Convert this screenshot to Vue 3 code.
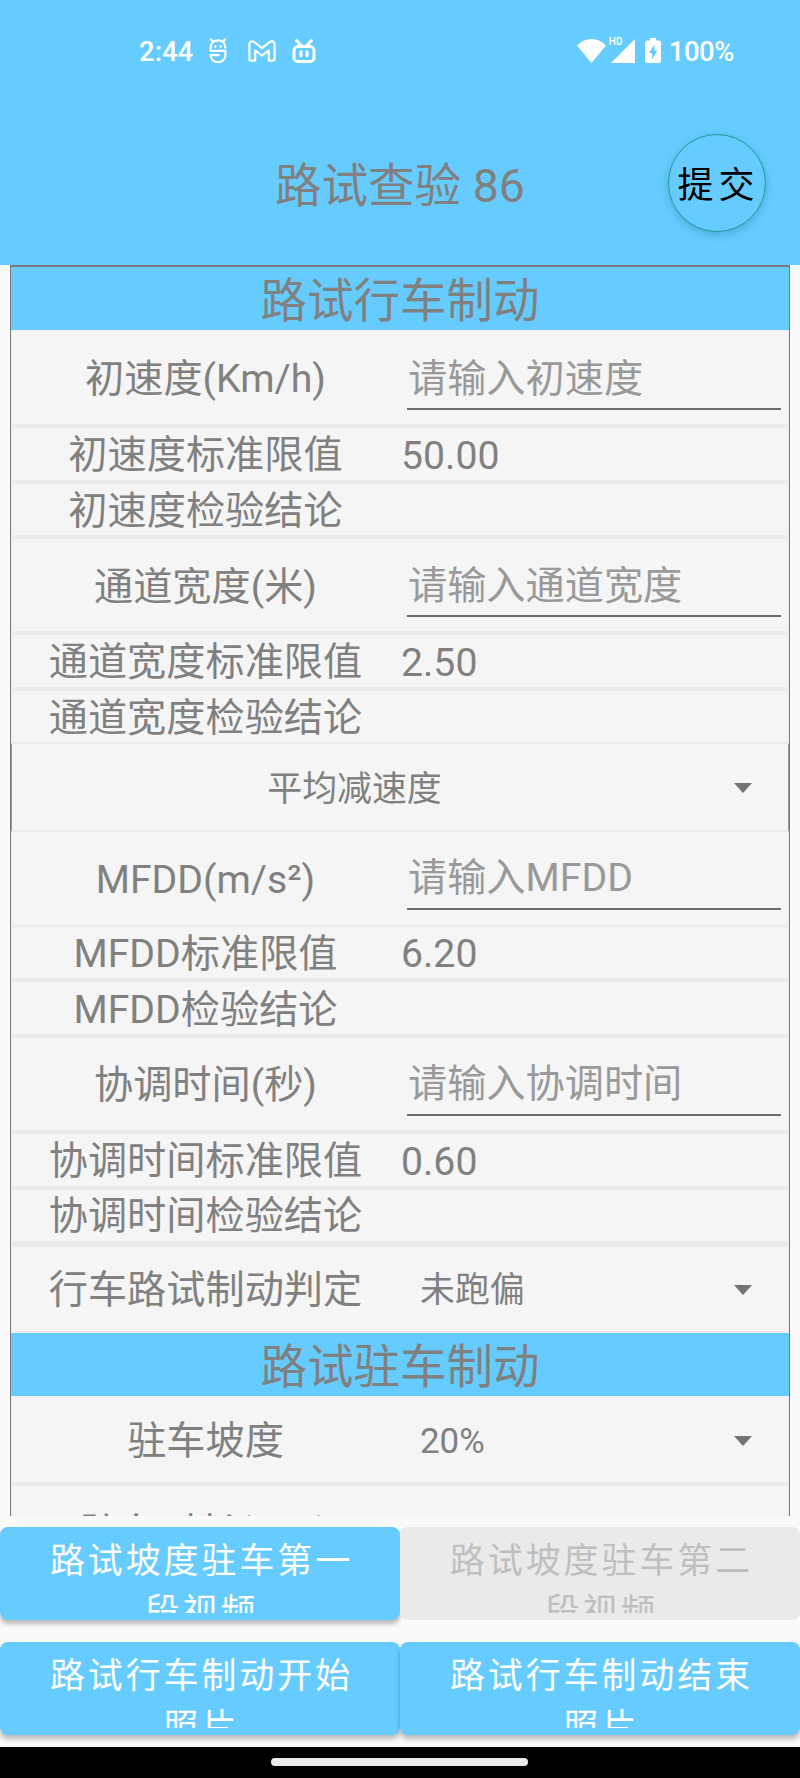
<template>
  <div class="screen">
    <header class="app-bar">
      <div class="status-bar">
        <div class="status-left">
          <span class="clock">2:44</span>
          <svg class="icon-s" viewBox="0 0 18 26">
            <path d="M16.4 9.6C16.2 5 13 2.4 9 2.4S1.6 5 1.6 9.6v3.2h14.8v4.4c0 4-3.2 7-7.4 7s-7.400-3-7.400-7h8.200" />
            <path d="M2 1.400 4 4M16 1.400 14 4M6.400 8v.8M11.600 8v.8" />
          </svg>
          <svg class="icon-m" viewBox="0 0 28 22">
            <path d="M1.400 4.200c0-2.600 2.800-3.600 4.800-2.200L14 8.200 21.800 2c2-1.400 4.800-.4 4.800 2.200V19q0 1.600-1.600 1.600h-4.200V10.400L14 15.600 7.200 10.400V20.600H3Q1.400 20.600 1.400 19Z" />
          </svg>
          <svg class="icon-tv" viewBox="0 0 24 24">
            <rect x="2" y="7.600" width="20" height="14.800" rx="4" />
            <path d="M4.600 1.600 9.600 7M19.400 1.600 14.400 7M9 12.800v4M15 12.800v4" />
          </svg>
        </div>
        <div class="status-right">
          <svg class="icon-wifi" viewBox="0 0 29 24">
            <path d="M0 6.400Q14.500-6.400 29 6.400L14.500 24Z" />
          </svg>
          <span class="hd">HD</span>
          <svg class="icon-signal" viewBox="0 0 24 24"><path d="M24 0V24H0Z" /></svg>
          <svg class="icon-battery" viewBox="0 0 16 25">
            <path fill-rule="evenodd" d="M5 0h6v2.500h3q2 0 2 2V23q0 2-2 2H2q-2 0-2-2V4.500q0-2 2-2h3ZM9.500 6.500 4 15h3v6l5.500-8.500h-3Z" />
          </svg>
          <span class="battery-text">100%</span>
        </div>
      </div>
      <div class="title-bar">
        <h1>路试查验 86</h1>
        <button class="submit" type="button">提交</button>
      </div>
    </header>

    <main class="sheet">
      <template v-for="(row, i) in rows" :key="i">
        <h2 v-if="row.type === 'section'" class="section">{{ row.label }}</h2>
        <div v-else-if="row.type === 'picker'" class="row picker" :class="row.gap">
          <span class="picker-text">{{ row.value }}</span>
          <i class="arrow"></i>
        </div>
        <div v-else class="row" :class="[row.type, row.gap]">
          <span class="label">{{ row.label }}</span>
          <div v-if="row.type === 'input'" class="field">
            <input v-if="row.hint" type="text" :placeholder="row.hint" />
          </div>
          <div v-else-if="row.type === 'select'" class="dropdown">
            <span>{{ row.value }}</span>
            <i class="arrow"></i>
          </div>
          <span v-else class="value">{{ row.value }}</span>
        </div>
      </template>
    </main>

    <footer class="actions">
      <button
        v-for="action in actions"
        :key="action.label"
        class="action"
        type="button"
        :disabled="action.disabled"
      >
        <span>{{ action.label }}</span>
      </button>
    </footer>
    <div class="nav-bar"><i></i></div>
  </div>
</template>

<script setup>
// gap 表示行下方分隔线的粗细：thin 为 2px，wide 为 6px，默认 4px
const rows = [
  { type: 'section', label: '路试行车制动' },
  { type: 'input', label: '初速度(Km/h)', hint: '请输入初速度' },
  { type: 'text', label: '初速度标准限值', value: '50.00' },
  { type: 'text', label: '初速度检验结论', value: '' },
  { type: 'input', label: '通道宽度(米)', hint: '请输入通道宽度' },
  { type: 'text', label: '通道宽度标准限值', value: '2.50' },
  { type: 'text', label: '通道宽度检验结论', value: '', gap: 'thin' },
  { type: 'picker', value: '平均减速度', gap: 'thin' },
  { type: 'input', label: 'MFDD(m/s²)', hint: '请输入MFDD', gap: 'thin' },
  { type: 'text', label: 'MFDD标准限值', value: '6.20' },
  { type: 'text', label: 'MFDD检验结论', value: '' },
  { type: 'input', label: '协调时间(秒)', hint: '请输入协调时间' },
  { type: 'text', label: '协调时间标准限值', value: '0.60' },
  { type: 'text', label: '协调时间检验结论', value: '', gap: 'wide' },
  { type: 'select', label: '行车路试制动判定', value: '未跑偏', gap: 'thin' },
  { type: 'section', label: '路试驻车制动' },
  { type: 'select', label: '驻车坡度', value: '20%' },
  { type: 'input', label: '驻车时长(min)' }
]

const actions = [
  { label: '路试坡度驻车第一段视频' },
  { label: '路试坡度驻车第二段视频', disabled: true },
  { label: '路试行车制动开始照片' },
  { label: '路试行车制动结束照片' }
]
</script>

<style>
body {
  margin: 0;
  background: #fafafa;
}
</style>

<style scoped>
.screen {
  display: flex;
  flex-direction: column;
  width: 800px;
  height: 1778px;
  overflow: hidden;
  color: #808080;
  background: #fafafa;
  font-family: Roboto, "Noto Sans CJK SC", sans-serif;
}

.screen * {
  box-sizing: border-box;
}

button,
input {
  font-family: inherit;
}

.app-bar {
  flex: none;
  height: 265px;
  background: #66ccff;
}

.status-bar {
  display: flex;
  justify-content: space-between;
  height: 100px;
  padding: 0 66px 0 139px;
  color: #fff;
}

.status-left,
.status-right {
  display: flex;
  align-items: center;
  height: 101px;
}

.status-bar svg {
  flex: none;
  fill: #fff;
}

.clock {
  width: 70px;
  padding-top: 1px;
  font-size: 27.5px;
  font-weight: 500;
}

.status-left svg {
  fill: none;
  stroke: #fff;
  stroke-width: 2.2;
  stroke-linecap: round;
  stroke-linejoin: round;
}

.icon-s {
  width: 18px;
  height: 26px;
}

.icon-m {
  width: 28px;
  height: 22px;
  margin-left: 21px;
}

.status-left .icon-tv {
  width: 24px;
  height: 24px;
  margin-left: 16px;
  stroke-width: 3;
}

.icon-wifi {
  width: 29px;
  height: 24px;
}

.hd {
  align-self: flex-start;
  width: 14px;
  margin: 36px -12px 0 3px;
  font-size: 10px;
  line-height: 12px;
  font-weight: 500;
}

.icon-signal {
  width: 24px;
  height: 24px;
  margin: 0 10px 0 0;
}

.icon-battery {
  width: 16px;
  height: 25px;
}

.battery-text {
  margin-left: 8px;
  padding-top: 2px;
  font-size: 27.5px;
  font-weight: 500;
  letter-spacing: -0.5px;
}

.title-bar {
  display: grid;
  grid-template-columns: 1fr auto 1fr;
  align-items: center;
  height: 166px;
}

.title-bar h1 {
  grid-column: 2;
  margin: 0;
  padding-top: 5px;
  font-size: 46.5px;
  line-height: 54px;
  font-weight: 400;
}

.submit {
  justify-self: end;
  width: 98px;
  height: 98px;
  margin-right: 34px;
  padding: 0 0 2px 3px;
  color: #000;
  background: #66ccff;
  border: 1px solid #1f9a96;
  border-radius: 50%;
  box-shadow: 0 3px 10px rgba(0, 50, 80, 0.22);
  font-family: KaiTi, STKaiti, "AR PL UKai CN", "Noto Sans CJK SC", sans-serif;
  font-size: 36px;
  letter-spacing: 5px;
  white-space: nowrap;
}

.sheet {
  flex: none;
  height: 1251px;
  margin: 0 10px;
  overflow: hidden;
  background: #f0f0f0;
  border: solid #777;
  border-width: 2px 1px 0;
}

.section {
  height: 63px;
  margin: 0 0 2px;
  padding-top: 6px;
  background: #66ccff;
  font-size: 46.5px;
  line-height: 56px;
  font-weight: 400;
  text-align: center;
}

.row {
  display: flex;
  align-items: stretch;
  height: 55.6px;
  margin: 0 2px;
  background: #f5f5f5;
  border-bottom: 4px solid #eaeaea;
  font-size: 39.2px;
}

.row.input {
  height: 96px;
}

.row.select {
  height: 88px;
}

.row.thin {
  border-bottom-width: 2px;
}

.row.text.thin {
  height: 53px;
}

.row.input.thin {
  height: 95px;
}

.row.select.thin {
  height: 86px;
}

.row.text.wide {
  height: 57px;
  border-bottom-width: 6px;
}

.label {
  display: flex;
  align-items: center;
  justify-content: center;
  width: 387px;
  padding: 4px 2px 0 0;
  line-height: 1;
  white-space: nowrap;
}

.value {
  display: flex;
  align-items: center;
  padding: 5px 0 0 1px;
  line-height: 1;
}

.field {
  flex: 1;
  padding: 12px 6px 0 7px;
}

.field input {
  display: block;
  width: 100%;
  height: 66px;
  padding: 5px 0 0 1px;
  color: #666;
  background: transparent;
  border: 0;
  border-bottom: 2px solid #6b6b6b;
  border-radius: 0;
  outline: none;
  font-size: 39.2px;
}

.field input::placeholder {
  color: #999;
  opacity: 1;
}

.dropdown {
  display: flex;
  flex: 1;
  align-items: center;
  justify-content: space-between;
  padding: 2px 35px 0 20px;
  font-size: 34.9px;
  line-height: 1;
}

.dropdown span {
  padding-top: 4px;
}

.arrow {
  width: 0;
  height: 0;
  border: solid transparent;
  border-width: 10px 9.5px 0;
  border-top-color: #737373;
}

.picker {
  height: 88px;
  align-items: center;
  margin: 0;
  padding: 3px 36px 0 0;
  border-right: 1px solid #999;
  border-left: 1px solid #999;
  font-size: 34.9px;
  line-height: 1;
}

.picker-text {
  flex: 1;
  padding: 4px 37px 0 0;
  text-align: center;
}

.actions {
  display: grid;
  grid-template-columns: 400px 400px;
  grid-auto-rows: 93px;
  row-gap: 22px;
  flex: none;
  height: 231px;
  padding-top: 11px;
}

.action {
  padding: 9px 44px 7px 47px;
  color: #fff;
  background: #66ccff;
  border: 0;
  border-radius: 8px;
  box-shadow: 0 4px 5px rgba(0, 0, 0, 0.26);
}

.action:disabled {
  color: #bfbfbf;
  background: #eaeaea;
  box-shadow: none;
}

.action span {
  display: block;
  height: 77px;
  overflow: hidden;
  font-size: 34.9px;
  line-height: 51px;
  letter-spacing: 3px;
  word-break: break-all;
}

.nav-bar {
  display: flex;
  flex: 1;
  justify-content: center;
  padding: 11px 1px 0 0;
  background: #000;
}

.nav-bar i {
  width: 257px;
  height: 8px;
  background: #ebebeb;
  border-radius: 4px;
}
</style>
